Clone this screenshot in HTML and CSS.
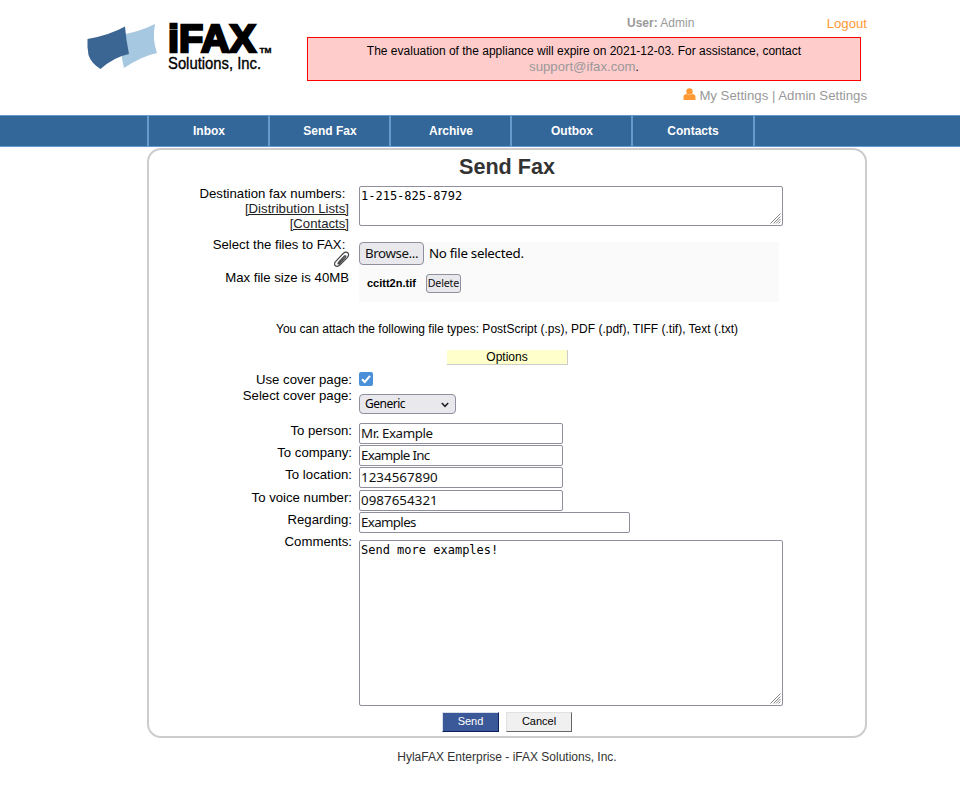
FILE: index.html
```html
<!DOCTYPE html>
<html lang="en">
<head>
<meta charset="utf-8">
<title>Send Fax</title>
<link rel="stylesheet" href="styles.css">
</head>
<body>
<header class="header">
  <svg class="logo" width="190" height="60" viewBox="0 -4 190 60" role="img" aria-label="iFAX Solutions, Inc.">
    <path fill="#a6c8e1" d="M35 15Q54 12 70 4Q67 19 72 33Q57 36 39 48Q35 32 35 15Z"/>
    <path fill="#3b6592" d="M2.500 19Q25 15 40 6.500Q41 20 44 34Q29 37 15.500 49Q6 43 3.500 35Q2 27 2.500 19Z"/>
    <text class="logo-name" x="83" y="32" textLength="88" lengthAdjust="spacingAndGlyphs">iFAX</text>
    <text class="logo-tm" x="174.500" y="32.500" textLength="12" lengthAdjust="spacingAndGlyphs">TM</text>
    <text class="logo-sub" x="83" y="48.500" textLength="93" lengthAdjust="spacingAndGlyphs">Solutions, Inc.</text>
  </svg>
  <div class="account">
    <div class="session"><span class="user"><b>User:</b> Admin</span><a class="logout">Logout</a></div>
    <div class="notice">The evaluation of the appliance will expire on 2021-12-03. For assistance, contact<br><a>support@ifax.com</a>.</div>
    <div class="settings">
      <svg width="13" height="12" viewBox="0 0 13 12"><path fill="#f93" d="M.5 12V9Q.5 6 4 6Q6.500 8 9 6Q12.500 6 12.500 9V12Z"/><circle cx="6.500" cy="3.500" r="3.200" fill="#f93"/></svg>
      <span>My Settings | Admin Settings</span>
    </div>
  </div>
</header>
<nav class="nav"><a>Inbox</a><a>Send Fax</a><a>Archive</a><a>Outbox</a><a>Contacts</a></nav>
<main class="panel">
  <h1>Send Fax</h1>
  <section class="row numbers">
    <div class="label wide">Destination fax numbers:&nbsp;<br><a>[Distribution Lists]</a><br><a>[Contacts]</a></div>
    <div class="area"><textarea>1-215-825-8792</textarea><svg class="grip" width="11" height="11" viewBox="0 0 11 11"><path d="M.5 10.500L10.500.5M3.500 10.500L10.500 3.500M6 10.500L10.500 6M8.500 10.500L10.500 8.500"/></svg></div>
  </section>
  <section class="row files">
    <div class="label wide">
      <div>Select the files to FAX:&nbsp;</div>
      <svg class="clip" width="17" height="17" viewBox="0 0 17 17" fill="none" stroke="#444" stroke-width="1.200" stroke-linecap="round"><path d="M5.500 11.500L11.500 5M2.300 10.800L10.200 2.500Q12.900.2 15 2Q16.400 4 14.500 6.300L6.300 14.500Q4 16.200 2.300 14.800Q.8 13.200 2.300 10.800M5.500 11.500Q4.300 13.300 5.900 12.900L12.500 6.200Q13.500 4.400 11.500 5"/></svg>
      <div>Max file size is 40MB</div>
    </div>
    <div class="filebox">
      <div class="picker"><button class="browse">Browse...</button><span>No file selected.</span></div>
      <div class="attached"><b>ccitt2n.tif</b><button class="delete">Delete</button></div>
    </div>
  </section>
  <p class="types">You can attach the following file types: PostScript (.ps), PDF (.pdf), TIFF (.tif), Text (.txt)</p>
  <div class="options">Options</div>
  <section class="row use-cover">
    <label class="label">Use cover page:</label>
    <span class="check"><svg width="14" height="14" viewBox="0 0 14 14" fill="none" stroke="#fff" stroke-width="2"><path d="M3 7.200L5.800 10L11 3.800"/></svg></span>
  </section>
  <section class="row cover">
    <label class="label">Select cover page:</label>
    <div class="select">Generic<svg width="8" height="6" viewBox="0 0 8 6" fill="none" stroke="#222" stroke-width="1.600"><path d="M.8 1L4 4.400L7.200 1"/></svg></div>
  </section>
  <section class="row field"><label class="label">To person:</label><input value="Mr. Example"></section>
  <section class="row field"><label class="label">To company:</label><input class="company" value="Example Inc"></section>
  <section class="row field tall"><label class="label">To location:</label><input class="digits" value="1234567890"></section>
  <section class="row field"><label class="label">To voice number:</label><input class="digits" value="0987654321"></section>
  <section class="row field"><label class="label">Regarding:</label><input class="long" value="Examples"></section>
  <section class="row comments"><label class="label">Comments:</label><div class="area"><textarea>Send more examples!</textarea><svg class="grip" width="11" height="11" viewBox="0 0 11 11"><path d="M.5 10.500L10.500.5M3.500 10.500L10.500 3.500M6 10.500L10.500 6M8.500 10.500L10.500 8.500"/></svg></div></section>
  <div class="actions"><button class="send">Send</button><button class="cancel">Cancel</button></div>
</main>
<footer>HylaFAX Enterprise - iFAX Solutions, Inc.</footer>
</body>
</html>
```
FILE: styles.css
```css
* { box-sizing: border-box; }
body { margin: 0; background: #fff; color: #000; font: 13.200px/15px "Liberation Sans", Arial, sans-serif; }
button, input { margin: 0; font-family: "Noto Sans", sans-serif; color: #111; }

.header { display: flex; width: 867px; height: 115px; padding: 16px 0 0 85px; }
.logo { flex: none; overflow: visible; }
.logo text { font-family: "Liberation Sans", sans-serif; fill: #000; stroke: #000; }
.logo .logo-name { font-size: 39.500px; font-weight: bold; stroke-width: 2.600px; }
.logo .logo-tm { font-size: 7.500px; font-weight: bold; stroke-width: .3px; }
.logo .logo-sub { font-size: 16px; stroke-width: .35px; }
.account { width: 560px; margin-left: 32px; color: #999; }
.session { display: flex; justify-content: space-between; height: 21px; padding-left: 320px; }
.user { font-size: 12px; line-height: 14px; }
.logout { color: #f93; }
.notice { width: 554px; height: 44px; padding-top: 6px; border: 1px solid #f00; background: #fcc; color: #000; font-size: 12px; line-height: 15px; text-align: center; }
.notice a { color: #999; font-size: 13.200px; }
.settings { display: flex; justify-content: flex-end; gap: 3px; margin-top: 7px; }

.nav { display: flex; height: 32px; padding-left: 147px; border: solid #69c; border-width: 1px 0; background: #369; }
.nav a { width: 121px; padding-left: 1px; border-left: 2px solid #69c; color: #fff; font-size: 12px; font-weight: bold; line-height: 30px; text-align: center; }
.nav a:last-child { width: 124px; padding: 0; border-right: 2px solid #69c; }

.panel { width: 720px; height: 590px; margin: 1px 0 0 147px; border: 2px solid #ccc; border-radius: 14px; }
h1 { height: 36px; margin: 0; padding-top: 4px; color: #333; font-size: 21.600px; line-height: 26px; text-align: center; }
.row { display: grid; grid-template-columns: 203px 1fr; column-gap: 7px; align-items: start; }
.label { text-align: right; }
.label.wide { padding-right: 3px; }
.label a { color: #222; text-decoration: underline; }
.area { position: relative; width: 424px; }
textarea { display: block; width: 100%; margin: 0; padding: 2px 1px; border: 1px solid #8f8f9d; border-radius: 2px; resize: none; font: 12px/15px "DejaVu Sans Mono", monospace; }
.grip { position: absolute; right: 2px; bottom: 2px; fill: none; stroke: #777; stroke-width: .9px; }
.numbers { height: 51px; }
.numbers textarea { height: 40px; }
.files { height: 85px; }
.clip { display: block; margin: -1px -1px 2px auto; }
.filebox { width: 420px; height: 60px; margin-top: 5px; background: #fafafa; }
.picker { display: flex; align-items: center; gap: 5px; font: 13.333px/15px "Noto Sans", sans-serif; letter-spacing: -.28px; }
.browse { width: 65px; height: 23px; padding: 0 0 2px; border: 1px solid #8f8f9d; border-radius: 4px; background: #e9e9ed; font-size: 13.333px; letter-spacing: -.4px; }
.attached { display: flex; align-items: center; gap: 10px; margin-top: 9px; padding-left: 8px; font-size: 11px; }
.delete { width: 35px; height: 19px; padding: 0 0 1px; border: 1px solid #8f8f9d; border-radius: 3px; background: #e9e9ed; font-size: 10.700px; letter-spacing: -.2px; }
.types { margin: 0; font-size: 12px; line-height: 15px; text-align: center; }
.options { width: 121px; height: 15px; margin: 13px 0 7px 298px; border: solid #ccc; border-width: 0 1px 1px 0; background: #ffc; font-size: 12px; text-align: center; }
.use-cover { height: 16px; }
.check { width: 14px; height: 14px; border-radius: 2px; background: #4a90d9; }
.check svg { display: block; }
.cover { height: 35px; }
.select { display: flex; align-items: center; justify-content: space-between; width: 97px; height: 20px; margin-top: 6px; padding: 0 6px 0 5px; border: 1px solid #8f8f9d; border-radius: 4px; background: #e9e9ed; font: 12px/16px "Noto Sans", sans-serif; letter-spacing: -.5px; }
.select svg { margin-top: 2px; }
.field { height: 22px; }
.field.tall { height: 23px; }
input { width: 204px; height: 21px; padding: 0 1px 2px; border: 1px solid #8f8f9d; border-radius: 2px; font-size: 13.333px; letter-spacing: -.4px; }
input.long { width: 271px; letter-spacing: -.65px; }
input.company { letter-spacing: -.7px; }
input.digits { letter-spacing: .05px; }
.comments textarea { height: 166px; margin-top: 6px; }
.actions { display: flex; gap: 7px; margin: 6px 0 0 293px; }
.actions button { height: 20px; padding: 0 0 2px; border: 1px solid; font: 11px "Liberation Sans", Arial, sans-serif; }
.actions .send { width: 57px; border-color: #d9dfea #0e1f5b #0e1f5b #d9dfea; background: #3b5998; color: #fff; }
.actions .cancel { width: 66px; border-color: #e0e0e0 #666 #666 #e0e0e0; background: #f0f0f0; color: #000; }
footer { width: 720px; margin: 12px 0 0 147px; color: #333; font-size: 12px; text-align: center; }
```
